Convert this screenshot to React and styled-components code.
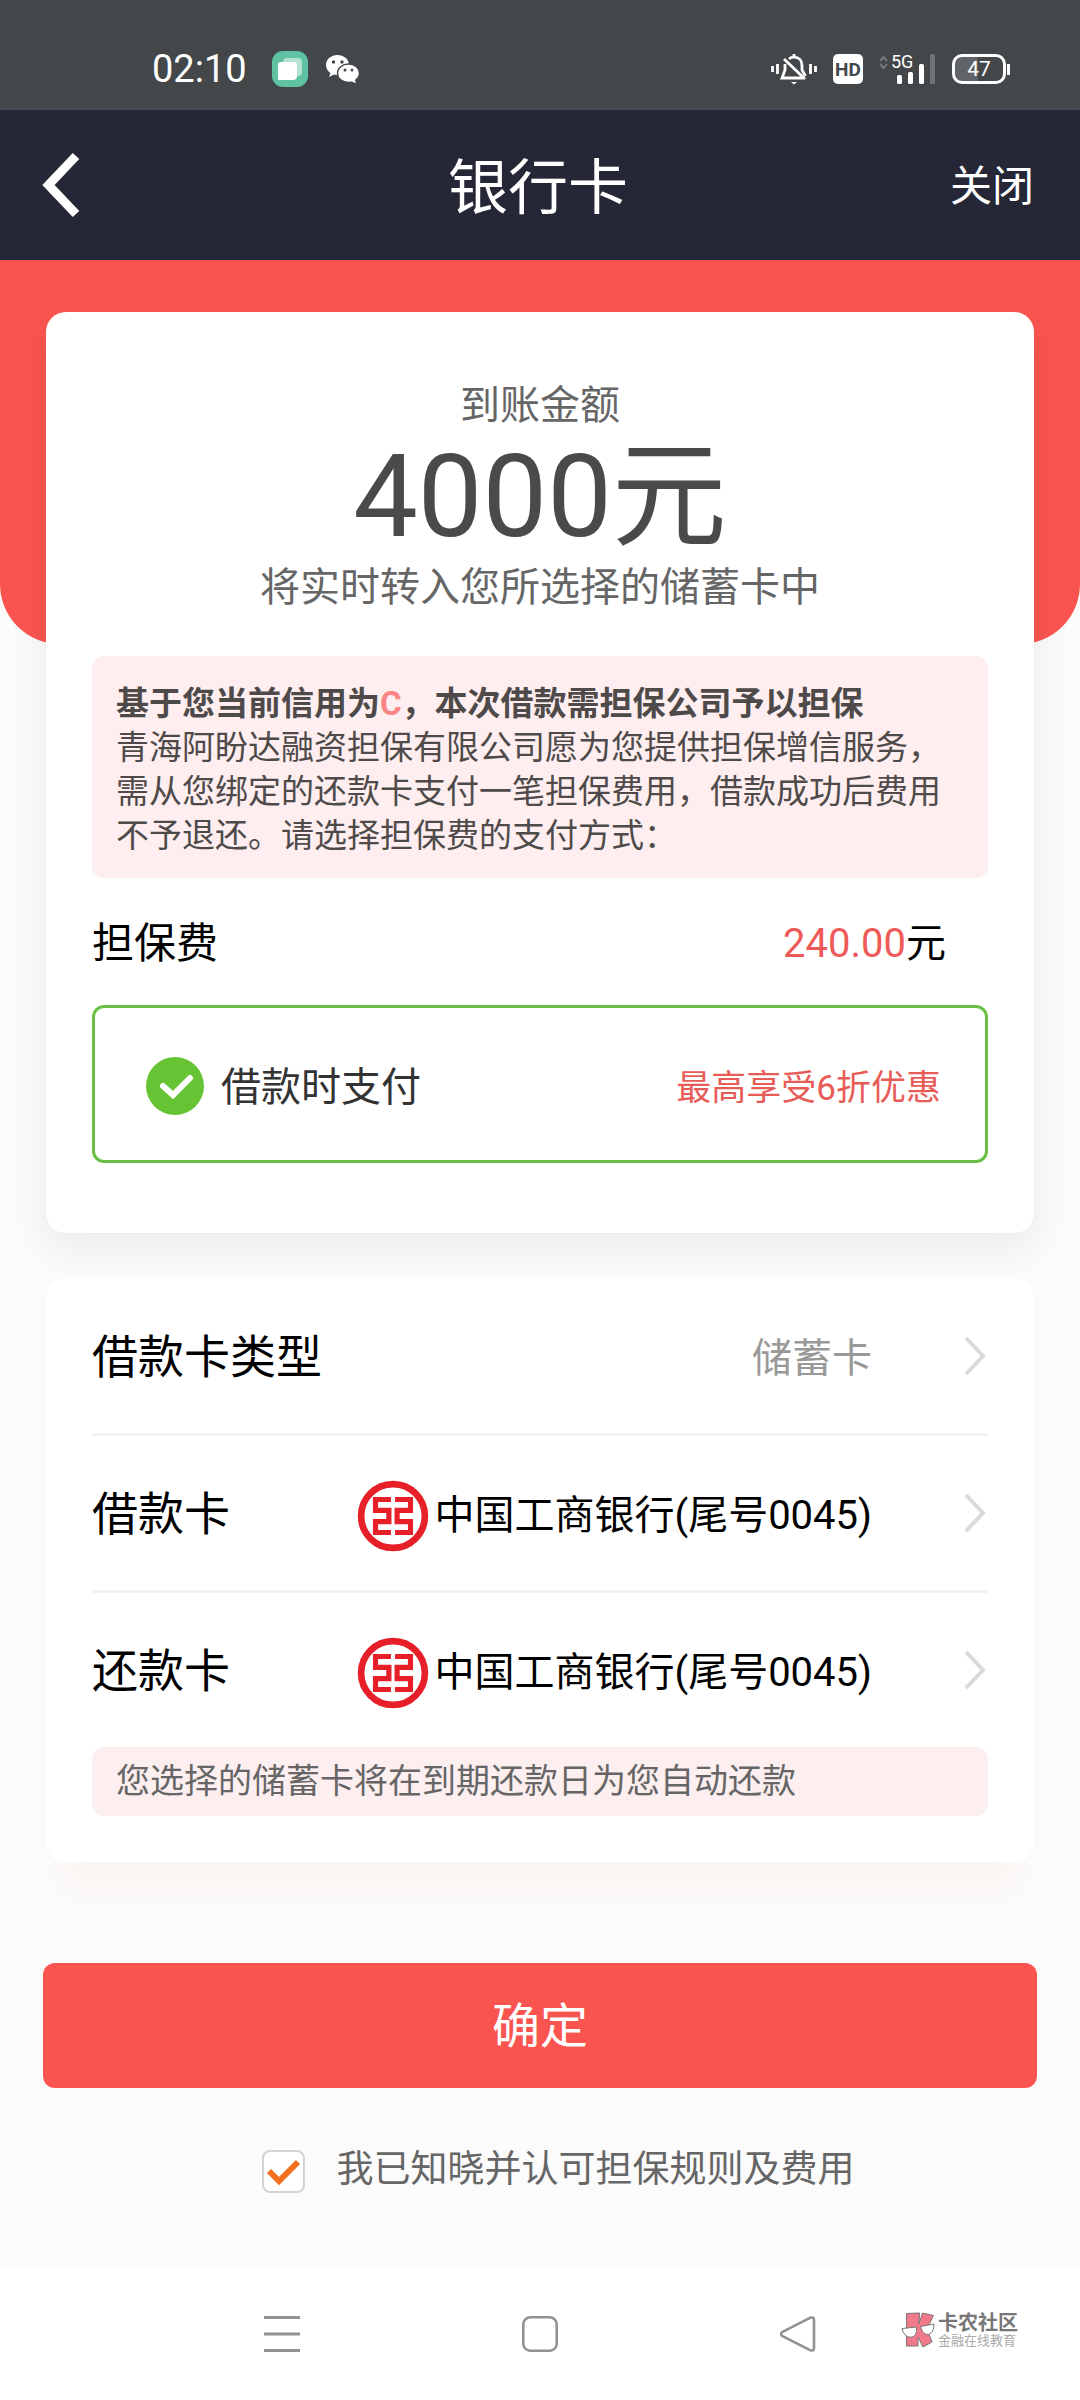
import React, { useState } from 'react';
import styled, { createGlobalStyle } from 'styled-components';

const GlobalStyle = createGlobalStyle`
  * {
    box-sizing: border-box;
  }

  body {
    margin: 0;
    background: #fbfbfb;
    font-family: Roboto, "Noto Sans CJK SC", sans-serif;
    color: #000;
  }

  button, input {
    margin: 0;
    font-family: inherit;
  }

  svg {
    display: block;
    flex: none;
  }
`;

const Page = styled('div')`
  display: flex;
  flex-direction: column;
  min-height: 100vh;
`;

const StatusBar = styled('div')`
  display: flex;
  align-items: flex-end;
  justify-content: space-between;
  height: 110px;
  padding: 0 70px 20px 152px;
  background: #43474a;
  border-bottom: 3px solid #444656;
  color: #fff;
`;

const StatusGroup = styled('div')`
  display: flex;
  align-items: center;
  gap: ${({ gap }) => gap}px;
  height: 36px;
`;

const Clock = styled('span')`
  width: 102px;
  font-size: 38px;
  line-height: 36px;
`;

const HdBadge = styled('span')`
  width: 30px;
  height: 30px;
  border-radius: 5px;
  background: #fff;
  color: #43474a;
  font-size: 19px;
  font-weight: bold;
  line-height: 31px;
  text-align: center;
`;

const Signal = styled('span')`
  display: grid;
  width: 57px;
  height: 30px;

  > * {
    grid-area: 1 / 1;
  }
`;

const Network = styled('span')`
  padding-left: 12px;
  font-size: 18px;
  line-height: 16px;
`;

const Battery = styled('span')`
  display: flex;
  align-items: center;
  gap: 1px;
`;

const BatteryBody = styled('span')`
  width: 54px;
  height: 30px;
  border: 3px solid #fff;
  border-radius: 10px;
  background: linear-gradient(90deg, #606468 47%, #43474a 47%);
  font-size: 21px;
  line-height: 25px;
  text-align: center;
`;

const BatteryTip = styled('span')`
  width: 3px;
  height: 11px;
  background: #fff;
`;

const Header = styled('header')`
  display: grid;
  grid-template-columns: 1fr auto 1fr;
  align-items: center;
  height: 150px;
  padding: 0 46px 0 42px;
  background: #252736;
  color: #fff;
`;

const Title = styled('h1')`
  margin: 0;
  padding-top: 8px;
  font-size: 60px;
  font-weight: normal;
  line-height: 72px;
`;

const PlainButton = styled('button')`
  justify-self: ${({ side }) => side};
  padding: ${({ side }) => (side === 'end' ? '4px 0 0' : 0)};
  border: 0;
  background: none;
  color: inherit;
  font-size: 42px;
  line-height: 56px;
`;

const Main = styled('main')`
  flex: 1;
`;

const Hero = styled('div')`
  height: 384px;
  margin-bottom: -332px;
  border-radius: 0 0 60px 60px;
  background: #fa5450;
`;

const Card = styled('section')`
  margin: 0 46px;
  padding: 0 46px;
  border-radius: 20px;
  background: #fff;
`;

const AmountCard = styled(Card)`
  padding-top: 66px;
  padding-bottom: 70px;
  box-shadow: 0 14px 40px rgba(0, 0, 0, 0.07);
`;

const BankCard = styled(Card)`
  margin-top: 46px;
  padding-bottom: 46px;
  box-shadow: 0 44px 30px -20px rgba(250, 110, 60, 0.05);
`;

const Caption = styled('p')`
  margin: 0;
  color: #666;
  font-size: 40px;
  line-height: 56px;
  text-align: center;
`;

const Amount = styled('p')`
  margin: 0;
  color: #4a4a4a;
  font-size: 115px;
  line-height: 126px;
  text-align: center;
`;

const Notice = styled('div')`
  margin-top: 40px;
  padding: 26px 24px 20px;
  border-radius: 12px;
  background: #feeeef;
  color: #4f4a4a;
  font-size: 33px;
  line-height: 44px;

  p {
    margin: 0;
  }
`;

const Grade = styled('span')`
  color: #f98584;
`;

const FeeRow = styled('div')`
  display: flex;
  align-items: center;
  justify-content: space-between;
  height: 127px;
  padding: 0 42px 4px 0;
  font-size: 42px;
`;

const Fee = styled('span')`
  font-size: 40px;

  em {
    color: #ee5a57;
    font-style: normal;
  }
`;

const PayOption = styled('label')`
  display: flex;
  align-items: center;
  height: 158px;
  padding: 0 44px 0 51px;
  border: 3px solid #6cbf45;
  border-radius: 12px;
  color: #333;
  font-size: 40px;
`;

const Mark = styled('span')`
  display: grid;
  place-items: center;
  margin-top: 3px;
  margin-right: ${({ gap }) => gap}px;

  > * {
    grid-area: 1 / 1;
  }

  svg {
    pointer-events: none;
  }
`;

const Radio = styled('input')`
  appearance: none;
  width: 58px;
  height: 58px;
  border: 2px solid #ccc;
  border-radius: 50%;

  &:checked {
    border: 0;
    background: #66c434;
  }
`;

const Offer = styled('span')`
  margin-left: auto;
  color: #e85c58;
  font-size: 35px;
`;

const Row = styled('button')`
  display: flex;
  align-items: center;
  width: 100%;
  height: ${({ last }) => (last ? 154 : 157)}px;
  padding: 0;
  border: 0;
  border-bottom: ${({ last }) => (last ? 0 : '3px solid #f2f2f2')};
  background: none;
  color: #000;
  text-align: left;
`;

const Label = styled('span')`
  padding-bottom: 6px;
  font-size: 46px;
`;

const Value = styled('span')`
  display: flex;
  align-items: center;
  gap: 5px;
  margin: 0 92px 0 auto;
  padding-bottom: 2px;
  color: ${({ muted }) => (muted ? '#999' : '#000')};
  font-size: 40px;

  svg {
    margin-top: 8px;
  }
`;

const Hint = styled('p')`
  margin: 0;
  padding: 0 24px;
  border-radius: 12px;
  background: #fdeeef;
  color: #666;
  font-size: 34px;
  line-height: 69px;
`;

const Confirm = styled('button')`
  display: block;
  width: calc(100% - 86px);
  height: 125px;
  margin: 101px 43px 0;
  padding: 0 0 8px;
  border: 0;
  border-radius: 12px;
  background: #fa5450;
  color: #fff;
  font-size: 48px;
`;

const Agree = styled('label')`
  display: flex;
  align-items: center;
  justify-content: center;
  margin: 54px 0;
  padding-left: 36px;
  color: #666;
  font-size: 37px;
  line-height: 56px;
`;

const Checkbox = styled('input')`
  appearance: none;
  width: 43px;
  height: 43px;
  border: 2px solid #d3d3d3;
  border-radius: 8px;
  background: #fff;
`;

const NavBar = styled('nav')`
  position: relative;
  display: flex;
  align-items: center;
  justify-content: center;
  gap: 222px;
  height: 132px;
  background: #fff;
`;

const NavButton = styled('button')`
  padding: 0;
  border: 0;
  background: none;
  color: #929292;
`;

const Watermark = styled('div')`
  position: absolute;
  right: 62px;
  bottom: 52px;
  display: flex;
  align-items: center;
  gap: 3px;
`;

const WatermarkText = styled('div')`
  color: #aaa;
  font-size: 13px;
  line-height: 14px;

  strong {
    display: block;
    color: #777;
    font-size: 20px;
    line-height: 22px;
  }
`;

const GalleryIcon = () => (
  <svg width="36" height="36" viewBox="0 0 36 36">
    <rect width="36" height="36" rx="11" fill="#5fc3a3" />
    <rect x="11" y="7" width="19" height="18" rx="4" fill="#b4e3d5" />
    <path d="M6 14a3 3 0 0 1 3-3h13a3 3 0 0 1 3 3v11a4 4 0 0 1-4 4H6z" fill="#fff" />
  </svg>
);

const WechatIcon = () => (
  <svg width="34" height="30" viewBox="0 0 34 30">
    <path d="M11.500 1C5.200 1 0 5.300 0 11c0 3.400 1.700 6.200 4.500 8L3 23l5-2.400 3.500.6c6.300 0 11.500-4.400 11.500-10.200S17.800 1 11.500 1z" fill="#fff" />
    <path d="M22.500 10C16.300 10 11.500 14 11.500 19.300S16.300 28.500 22.500 28.500l3-.4 5.500 2-1.300-4.100C32 24.400 33.500 22 33.500 19.300 33.500 14 28.700 10 22.500 10z" fill="#fff" stroke="#43474a" strokeWidth="1.400" />
    <g fill="#43474a">
      <circle cx="7.500" cy="8" r="1.700" />
      <circle cx="16" cy="8" r="1.700" />
      <circle cx="19" cy="16" r="1.500" />
      <circle cx="26" cy="16" r="1.500" />
    </g>
  </svg>
);

const MuteIcon = () => (
  <svg width="46" height="32" viewBox="0 0 46 32" fill="none" stroke="#fff" strokeWidth="2.800">
    <path d="M1.500 13v6M6.500 11v10M39.500 11v10M44.500 13v6" />
    <path d="M18 6c1.500-1.400 3-1.800 5-1.800 5 0 8 3.200 8 8V17l3.500 6M14 11v6l-3 8H32" />
    <path d="M23 1v4M13 6l21 20" />
    <path d="M20 29h6l-3 2.500z" fill="#fff" stroke="none" />
  </svg>
);

const SignalBars = () => (
  <svg width="57" height="30" viewBox="0 0 57 30">
    <path d="M1 7l3.500-4L8 7M1 10l3.500 4L8 10" fill="none" stroke="#76797c" strokeWidth="2" />
    <g fill="#fff">
      <rect x="18" y="21" width="5" height="9" rx="1.500" />
      <rect x="29" y="18" width="5" height="12" rx="1.500" />
      <rect x="40" y="10" width="5" height="20" rx="1.500" />
      <rect x="51" y="0" width="5" height="30" rx="1.500" fill="#717477" />
    </g>
  </svg>
);

const BackIcon = () => (
  <svg width="38" height="66" viewBox="2 0 38 66" fill="none" stroke="#fff" strokeWidth="9">
    <path d="M36 4L8.500 33 36 62" />
  </svg>
);

const Chevron = () => (
  <svg width="24" height="42" viewBox="0 0 24 42" fill="none" stroke="#dadada" strokeWidth="4">
    <path d="M2 3l17 18L2 39" />
  </svg>
);

const BankLogo = () => (
  <svg width="72" height="72" viewBox="0 0 70 70" fill="none" stroke="#e61f29">
    <circle cx="35" cy="35" r="31" strokeWidth="6.500" />
    <path d="M33 19H18V29.500h13V40.500H18V51h15" strokeWidth="5" />
    <path d="M37 19H52V29.500H39V40.500h13V51H37" strokeWidth="5" />
  </svg>
);

const MenuIcon = () => (
  <svg width="36" height="36" viewBox="0 0 36 36" fill="none" stroke="currentColor" strokeWidth="3">
    <path d="M0 1.500h36M0 18h36M0 34.500h36" />
  </svg>
);

const HomeIcon = () => (
  <svg width="36" height="36" viewBox="0 0 36 36" fill="none" stroke="currentColor" strokeWidth="2.600">
    <rect x="1.300" y="1.300" width="33.400" height="33.400" rx="7" />
  </svg>
);

const ReturnIcon = () => (
  <svg width="36" height="36" viewBox="0 0 36 36" fill="none" stroke="currentColor" strokeWidth="2.600" strokeLinejoin="round">
    <path d="M2 16.200L30 1.800Q34 0.500 34 4V32Q34 35.500 30 34.200L2 19.800Q0 18 2 16.200z" />
  </svg>
);

const MascotIcon = () => (
  <svg width="34" height="36" viewBox="0 0 34 36" stroke="#777" strokeWidth="1">
    <path d="M5.500 1.500L18.500 1 18 12 21.500 1 32.500 3.500 26 17 31 30 22 35 17 25V34H5.500z" fill="#f2798a" />
    <path d="M1 16.500L15.500 15q1 10-6 10.300Q3 25 1 16.500zM19.500 14.500L33 12q0 9-5.500 10.500-6 .5-8-8z" fill="#fff" />
  </svg>
);

const rows = [
  { label: '借款卡类型', value: '储蓄卡', muted: true },
  { label: '借款卡', value: '中国工商银行(尾号0045)', logo: true },
  { label: '还款卡', value: '中国工商银行(尾号0045)', logo: true },
];

export default () => {
  const [agreed, setAgreed] = useState(true);

  return (
    <Page>
      <GlobalStyle />
      <StatusBar>
        <StatusGroup gap={18}>
          <Clock>02:10</Clock>
          <GalleryIcon />
          <WechatIcon />
        </StatusGroup>
        <StatusGroup gap={16}>
          <MuteIcon />
          <HdBadge>HD</HdBadge>
          <Signal>
            <SignalBars />
            <Network>5G</Network>
          </Signal>
          <Battery>
            <BatteryBody>47</BatteryBody>
            <BatteryTip />
          </Battery>
        </StatusGroup>
      </StatusBar>

      <Header>
        <PlainButton side="start" aria-label="返回"><BackIcon /></PlainButton>
        <Title>银行卡</Title>
        <PlainButton side="end">关闭</PlainButton>
      </Header>

      <Main>
        <Hero />
        <AmountCard>
          <Caption>到账金额</Caption>
          <Amount>4000元</Amount>
          <Caption>将实时转入您所选择的储蓄卡中</Caption>
          <Notice>
            <p><strong>基于您当前信用为<Grade>C</Grade>，本次借款需担保公司予以担保</strong></p>
            <p>青海阿盼达融资担保有限公司愿为您提供担保增信服务，需从您绑定的还款卡支付一笔担保费用，借款成功后费用不予退还。请选择担保费的支付方式：</p>
          </Notice>
          <FeeRow>
            <span>担保费</span>
            <Fee><em>240.00</em>元</Fee>
          </FeeRow>
          <PayOption>
            <Mark gap={17}>
              <Radio type="radio" name="pay" defaultChecked />
              <svg width="58" height="58" viewBox="0 0 58 58" fill="none" stroke="#fff" strokeWidth="6" strokeLinecap="round">
                <path d="M17 29l10 9 17-17" />
              </svg>
            </Mark>
            借款时支付
            <Offer>最高享受6折优惠</Offer>
          </PayOption>
        </AmountCard>

        <BankCard>
          {
            rows.map(({ label, value, muted, logo }, i) => (
              <Row key={label} last={i === rows.length - 1 ? 1 : 0}>
                <Label>{label}</Label>
                <Value muted={muted ? 1 : 0}>
                  {logo && <BankLogo />}
                  {value}
                </Value>
                <Chevron />
              </Row>
            ))
          }
          <Hint>您选择的储蓄卡将在到期还款日为您自动还款</Hint>
        </BankCard>

        <Confirm>确定</Confirm>
        <Agree>
          <Mark gap={32}>
            <Checkbox type="checkbox" checked={agreed} onChange={() => setAgreed(!agreed)} />
            {agreed && (
              <svg width="43" height="43" viewBox="0 0 43 43" fill="none" stroke="#f37021" strokeWidth="6">
                <path d="M7 21l10 10 19-19" />
              </svg>
            )}
          </Mark>
          我已知晓并认可担保规则及费用
        </Agree>
      </Main>

      <NavBar>
        <NavButton aria-label="菜单"><MenuIcon /></NavButton>
        <NavButton aria-label="主页"><HomeIcon /></NavButton>
        <NavButton aria-label="后退"><ReturnIcon /></NavButton>
        <Watermark>
          <MascotIcon />
          <WatermarkText>
            <strong>卡农社区</strong>
            金融在线教育
          </WatermarkText>
        </Watermark>
      </NavBar>
    </Page>
  );
};
